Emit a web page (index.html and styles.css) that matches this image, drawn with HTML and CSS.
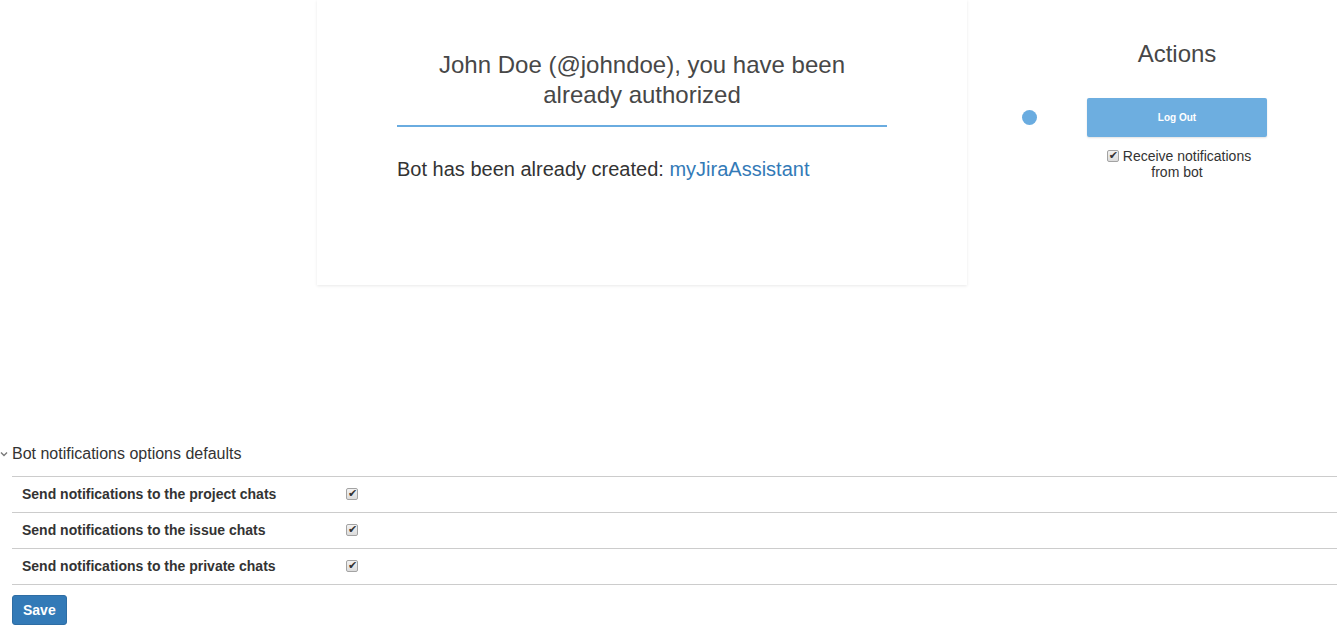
FILE: index.html
```html
<!DOCTYPE html>
<html lang="en">
<head>
<meta charset="utf-8">
<title>Bot settings</title>
<link rel="stylesheet" href="styles.css">
</head>
<body>
<div class="top">
  <section class="card">
    <h1 class="card-title">John Doe (@johndoe), you have been already authorized</h1>
    <p class="bot-created">Bot has been already created: <a href="#" class="bot-link">myJiraAssistant</a></p>
  </section>
  <aside class="actions">
    <span class="loader"></span>
    <h2 class="actions-title">Actions</h2>
    <button class="logout" type="button">Log Out</button>
    <label class="receive"><input type="checkbox" class="chk" checked>Receive notifications from bot</label>
  </aside>
</div>
<section class="defaults">
  <div class="defaults-head">
    <svg class="chev" width="8" height="6" viewBox="0 0 8 6"><polyline points="1,1.5 4,4.5 7,1.5" fill="none" stroke="#7a7a7a" stroke-width="1.4"/></svg>
    <span>Bot notifications options defaults</span>
  </div>
  <div class="opts">
    <div class="opt-row"><span class="opt-label">Send notifications to the project chats</span><span class="opt-val"><input type="checkbox" class="chk" checked></span></div>
    <div class="opt-row"><span class="opt-label">Send notifications to the issue chats</span><span class="opt-val"><input type="checkbox" class="chk" checked></span></div>
    <div class="opt-row"><span class="opt-label">Send notifications to the private chats</span><span class="opt-val"><input type="checkbox" class="chk" checked></span></div>
  </div>
  <button class="save" type="button">Save</button>
</section>
</body>
</html>
```
FILE: styles.css
```css
html, body {
  margin: 0;
  padding: 0;
  background: #fff;
}
body {
  font-family: "Liberation Sans", Arial, sans-serif;
  color: #333;
  font-size: 14px;
}
.top {
  display: flex;
  align-items: flex-start;
  padding-left: 317px;
}
.card {
  width: 650px;
  height: 285px;
  box-sizing: border-box;
  padding: 50px 80px 0;
  background: #fff;
  box-shadow: 0 1px 3px rgba(0, 0, 0, 0.09);
}
.card-title {
  margin: 0;
  font-size: 24px;
  line-height: 30px;
  font-weight: normal;
  color: #474747;
  text-align: center;
  padding: 0 20px 15px;
  border-bottom: 2px solid #6aace0;
}
.bot-created {
  margin: 28px 0 0;
  font-size: 20px;
  line-height: 28px;
  color: #333;
}
.bot-link {
  color: #337ab7;
  text-decoration: none;
}
.actions {
  position: relative;
  width: 320px;
  margin-left: 50px;
  padding-top: 39px;
  display: flex;
  flex-direction: column;
  align-items: center;
}
.loader {
  position: absolute;
  left: 5px;
  top: 110px;
  width: 15px;
  height: 15px;
  border-radius: 50%;
  background: #6aace0;
}
.actions-title {
  margin: 0;
  font-size: 24px;
  line-height: 30px;
  font-weight: normal;
  color: #474747;
}
.logout {
  margin-top: 29px;
  width: 180px;
  height: 39px;
  border: 0;
  border-radius: 2px;
  background: #6daee0;
  color: #fff;
  font-family: "Liberation Sans", Arial, sans-serif;
  font-size: 10px;
  font-weight: bold;
  box-shadow: 0 1px 2px rgba(0, 0, 0, 0.12);
  padding: 0;
}
.receive {
  margin-top: 11px;
  width: 180px;
  text-align: center;
  font-size: 14px;
  line-height: 16px;
  color: #333;
}
.chk {
  -webkit-appearance: none;
  appearance: none;
  position: relative;
  width: 12px;
  height: 12px;
  margin: 0 4px 0 4px;
  box-sizing: border-box;
  border: 1px solid #a3a3a3;
  border-radius: 2px;
  background: linear-gradient(#f2f2f2, #dcdcdc);
  vertical-align: -1px;
}
.chk:checked::after {
  content: "\2714";
  position: absolute;
  left: 1px;
  top: -2px;
  font-family: "DejaVu Sans", sans-serif;
  font-size: 11px;
  line-height: 14px;
  color: #333;
}
.defaults {
  margin-top: 159px;
}
.defaults-head {
  display: flex;
  align-items: center;
  gap: 4px;
  font-size: 16px;
  line-height: 19px;
  color: #333;
}
.chev {
  display: block;
  margin-top: 1px;
}
.opts {
  margin: 13px 0 0 12px;
  border-bottom: 1px solid #ccc;
}
.opt-row {
  display: grid;
  grid-template-columns: 331px 1fr;
  align-items: center;
  height: 35px;
  border-top: 1px solid #ccc;
}
.opt-label {
  padding: 0 0 2px 10px;
  font-weight: bold;
  font-size: 14px;
  line-height: 16px;
  color: #333;
}
.opt-val {
  display: flex;
  align-items: center;
  padding-bottom: 2px;
}
.opt-val .chk {
  margin: 0 0 0 3px;
}
.save {
  margin: 10px 0 0 12px;
  padding: 4px 10px;
  border: 1px solid #2e6da4;
  border-radius: 3px;
  background: #337ab7;
  color: #fff;
  font-family: "Liberation Sans", Arial, sans-serif;
  font-size: 14px;
  font-weight: bold;
  line-height: 20px;
}
```
